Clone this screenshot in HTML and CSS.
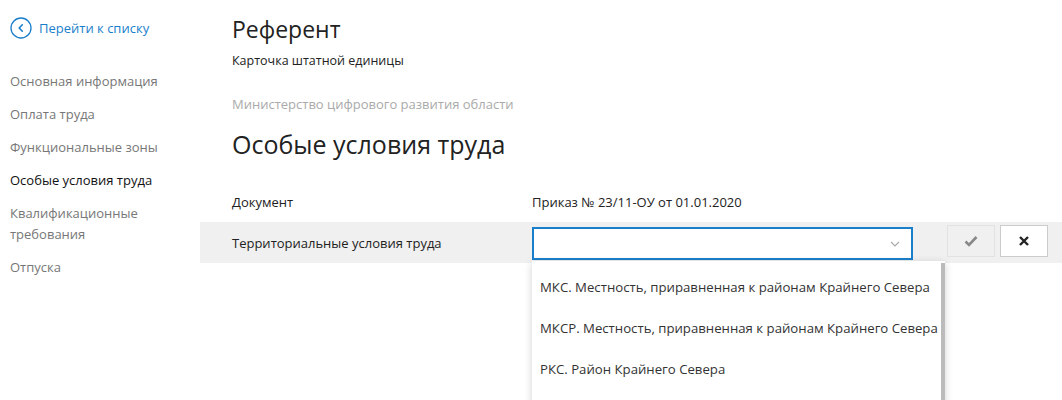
FILE: index.html
```html
<!DOCTYPE html>
<html lang="ru">
<head>
<meta charset="utf-8">
<link rel="stylesheet" href="styles.css">
</head>
<body>
<div class="page">
  <aside class="side">
    <a class="back" href="#">
      <svg class="back-icon" width="22" height="22" viewBox="0 0 22 22"><circle cx="11" cy="11" r="10" fill="none" stroke="#1a7fcb" stroke-width="1.3"/><path d="M12.3 7.8 L9.2 11 L12.3 14.2" fill="none" stroke="#1a7fcb" stroke-width="1.6" stroke-linecap="round" stroke-linejoin="round"/></svg>
      <span>Перейти к списку</span>
    </a>
    <nav class="nav">
      <a class="nav-item" href="#">Основная информация</a>
      <a class="nav-item" href="#">Оплата труда</a>
      <a class="nav-item" href="#">Функциональные зоны</a>
      <a class="nav-item active" href="#">Особые условия труда</a>
      <a class="nav-item" href="#">Квалификационные требования</a>
      <a class="nav-item" href="#">Отпуска</a>
    </nav>
  </aside>
  <main class="main">
    <h1 class="title">Референт</h1>
    <div class="subtitle">Карточка штатной единицы</div>
    <div class="org">Министерство цифрового развития области</div>
    <h2 class="section">Особые условия труда</h2>
    <div class="row">
      <div class="label">Документ</div>
      <div class="value">Приказ № 23/11-ОУ от 01.01.2020</div>
    </div>
    <div class="row edit">
      <div class="label">Территориальные условия труда</div>
      <div class="field">
        <div class="select">
          <svg class="chev" width="10" height="6" viewBox="0 0 10 6"><path d="M1 1 L5 5 L9 1" fill="none" stroke="#aaa" stroke-width="1.2"/></svg>
        </div>
        <div class="dropdown">
          <div class="opt">МКС. Местность, приравненная к районам Крайнего Севера</div>
          <div class="opt">МКСР. Местность, приравненная к районам Крайнего Севера</div>
          <div class="opt">РКС. Район Крайнего Севера</div>
          <div class="scroll"></div>
        </div>
      </div>
      <div class="btns">
        <button class="btn ok"><svg width="14" height="12" viewBox="0 0 14 12"><path d="M1.5 6.5 L5 10 L12.5 2" fill="none" stroke="#888" stroke-width="2.6"/></svg></button>
        <button class="btn cancel"><svg width="12" height="12" viewBox="0 0 12 12"><path d="M2 2 L10 10 M10 2 L2 10" fill="none" stroke="#222" stroke-width="2.4"/></svg></button>
      </div>
    </div>
  </main>
</div>
</body>
</html>
```

FILE: styles.css
```css
* { box-sizing: border-box; }
html, body { margin: 0; padding: 0; background: #fff; }
body {
  font-family: "Open Sans", "Noto Sans", sans-serif;
  color: #222;
  width: 1062px;
  height: 400px;
  overflow: hidden;
}
.page { display: flex; }
.side { width: 200px; flex: none; padding: 17px 0 0 10px; }
.back { display: flex; align-items: center; gap: 7px; text-decoration: none; color: #1a7fcb; font-size: 13px; }
.back-icon { flex: none; }
.nav { display: flex; flex-direction: column; margin-top: 26px; gap: 0; }
.nav-item {
  text-decoration: none; color: #777; font-size: 13px; line-height: 21px;
  padding: 6px 0; width: 160px;
}
.nav-item.active { color: #111; }
.main { flex: 1; padding-top: 12px; }
.title { margin: 0 0 0 32px; font-weight: 400; font-size: 23px; line-height: 34px; color: #222; }
.subtitle { margin: 6px 0 0 32px; font-size: 12.5px; line-height: 18px; }
.org { margin: 24px 0 0 32px; font-size: 13px; line-height: 20px; color: #aaa; }
.section { margin: 12px 0 0 32px; font-weight: 400; font-size: 25px; line-height: 36px; color: #222; }
.row { display: flex; align-items: center; margin-top: 24px; height: 32px; padding-left: 32px; font-size: 13px; }
.row .label { width: 300px; flex: none; }
.row .value { color: #222; }
.row.edit { margin-top: 4px; height: 41px; background: #f0f0f0; position: relative; }
.field { position: relative; width: 381px; flex: none; align-self: flex-start; margin-top: 5px; }
.select { height: 33px; border: 2px solid #1a7fcb; background: #fff; position: relative; }
.chev { position: absolute; right: 11px; top: 12px; }
.dropdown {
  position: absolute; left: 0; top: 34px; width: 413px; background: #fff;
  box-shadow: 0 2px 8px rgba(0,0,0,0.18); padding-top: 6px; height: 150px; z-index: 2;
}
.opt { font-size: 13.2px; color: #333; height: 41px; line-height: 41px; padding-left: 8px; white-space: nowrap; }
.scroll { position: absolute; right: 0; top: 2px; width: 4px; bottom: 0; background: #bbb; }
.btns { display: flex; gap: 5px; margin-left: 34px; align-self: flex-start; margin-top: 3px; }
.btn { width: 48px; height: 32px; display: flex; align-items: center; justify-content: center; padding: 0; cursor: pointer; }
.btn.ok { background: #f0f0f0; border: 1px solid #e2e2e2; }
.btn.cancel { background: #fff; border: 1px solid #ccc; }
```
